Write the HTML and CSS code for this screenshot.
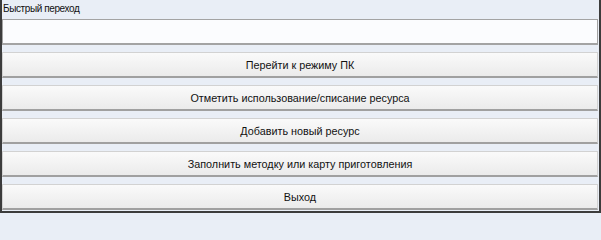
FILE: index.html
```html
<!DOCTYPE html>
<html lang="ru">
<head>
<meta charset="utf-8">
<link rel="stylesheet" href="styles.css">
</head>
<body>
<div class="panel">
  <div class="label">Быстрый переход</div>
  <div class="input"></div>
  <div class="btns">
    <div class="btn">Перейти к режиму ПК</div>
    <div class="btn">Отметить использование/списание ресурса</div>
    <div class="btn">Добавить новый ресурс</div>
    <div class="btn">Заполнить методку или карту приготовления</div>
    <div class="btn">Выход</div>
  </div>
</div>
</body>
</html>
```
FILE: styles.css
```css
html, body { margin: 0; padding: 0; }
body { width: 601px; height: 213px; overflow: hidden; background: #e9eef6; }
.panel {
  box-sizing: border-box;
  width: 601px;
  height: 213px;
  background: #e9eef6;
  border-left: 2px solid #3c3c3c;
  border-right: 2px solid #3c3c3c;
  border-bottom: 2px solid #3c3c3c;
  padding: 0 1px 0 0;
  font-family: "Liberation Sans", Arial, sans-serif;
  color: #111;
  display: flex;
  flex-direction: column;
}
.label {
  height: 19px;
  font-size: 10px;
  letter-spacing: -0.4px;
  line-height: 18px;
  padding-left: 1px;
}
.input {
  box-sizing: border-box;
  height: 26px;
  background: #fbfcfe;
  border: 1px solid #a3a3a3;
  border-bottom-width: 2px;
}
.btns {
  display: flex;
  flex-direction: column;
  gap: 7px;
  margin-top: 7px;
}
.btn {
  box-sizing: border-box;
  height: 26px;
  border: 1px solid #d2d2d2;
  border-bottom: 2px solid #a0a0a0;
  background: linear-gradient(#fafafa, #ebebeb);
  font-size: 10.8px;
  line-height: 24px;
  text-align: center;
}
```
